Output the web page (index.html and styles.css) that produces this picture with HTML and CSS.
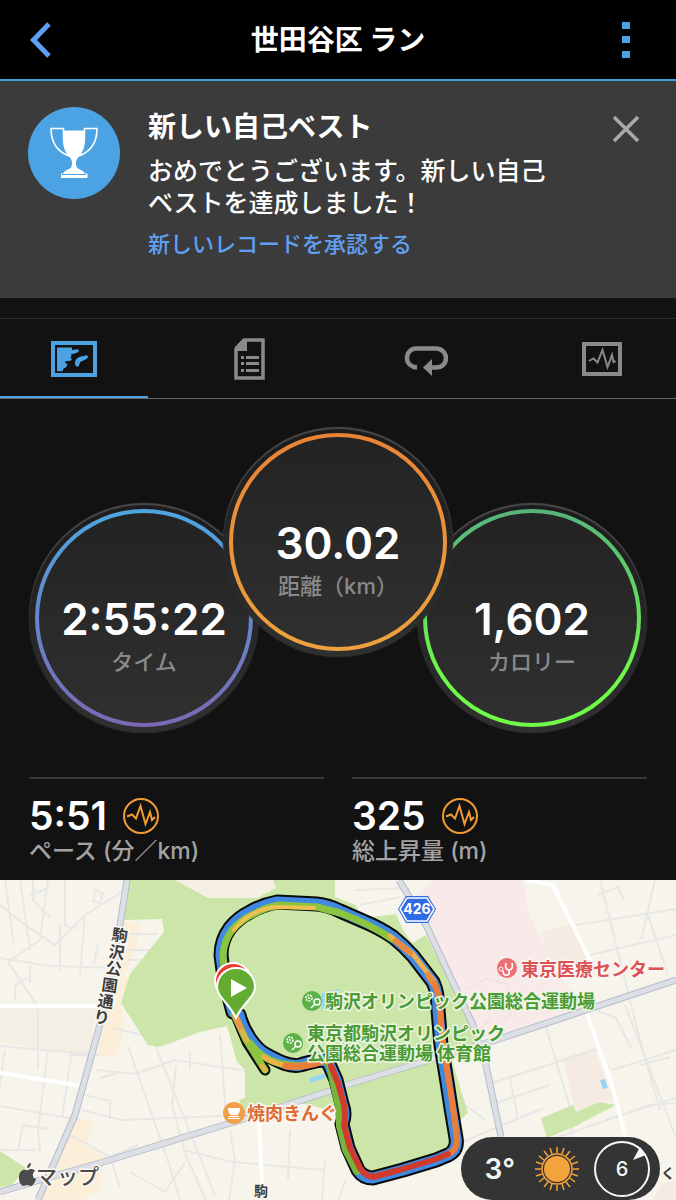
FILE: index.html
```html
<!DOCTYPE html>
<html lang="ja">
<head>
<meta charset="utf-8">
<meta name="viewport" content="width=device-width, initial-scale=1">
<title>世田谷区 ラン</title>
<link rel="stylesheet" href="styles.css">
</head>
<body>
<header class="topbar">
  <button class="icon-btn icon-btn-back" type="button" aria-label="戻る">
    <svg width="24" height="36" viewBox="0 0 24 36"><path d="M21 2 5.500 18 21 34" fill="none" stroke="#5f9ff5" stroke-width="5"/></svg>
  </button>
  <h1 class="topbar-title">世田谷区 ラン</h1>
  <button class="icon-btn" type="button" aria-label="メニュー">
    <svg width="8" height="36" viewBox="0 0 8 36" fill="#4ba3e3"><path d="M0 0h8v7H0zM0 14h8v7H0zM0 29h8v7H0z"/></svg>
  </button>
</header>

<section class="banner">
  <svg class="trophy" viewBox="0 0 92 92">
    <circle cx="46" cy="46" r="46" fill="#4ba3e3"/>
    <g fill="none" stroke="#fff" stroke-width="1.600">
      <path d="M35.500 26V21.500H23c0 13 6 23 18 27.500"/>
      <path d="M56.500 26V21.500H69c0 13-6 23-18 27.500"/>
    </g>
    <path d="M35 23.500h22c1 13-1 20-5 25-3 3-5 5-3.500 11 1 3.500 8 3.500 8 7h3v4.500H33v-4.500h2.500c0-3.500 7-3.500 8-7 1.500-6-.5-8-3.500-11-4-5-6-12-5-25z" fill="#fff"/>
    <path d="M34 67.500h24" stroke="#4ba3e3" stroke-width="1"/>
  </svg>
  <div class="banner-text">
    <h2 class="banner-title">新しい自己ベスト</h2>
    <p class="banner-body">おめでとうございます。新しい自己ベストを達成しました！</p>
    <a class="banner-link" href="#records">新しいレコードを承認する</a>
  </div>
  <button class="close-btn" type="button" aria-label="閉じる">
    <svg width="28" height="28" viewBox="0 0 28 28"><path d="M2 2 26 26M26 2 2 26" stroke="#a9a9a9" stroke-width="3.500"/></svg>
  </button>
</section>

<nav class="tabs">
  <button class="tab tab-active" type="button" aria-label="マップ">
    <svg width="46" height="36" viewBox="0 0 46 36" fill="#4ba3e3">
      <path d="M2 2H44V34H2z" fill="none" stroke="#4ba3e3" stroke-width="4"/>
      <path d="M6 6.500h15v2.500l5.500-.8a1.600 1.600 0 0 1 .5 3l-3.500 1.200-3.500.8 .5 2-1 1.500 1.500 1.500-1.500 1.500-5 .5-.5 1.500 2.500 1.500-1.500 3-2.500 1.500-1 2.500H6z"/>
      <path d="M24 22c0-4 3-6.500 9-7l2-.8a1.700 1.700 0 0 1 1 3.200l-4.500 2.600c-3 .5-2.500 2.500-3.500 4.500s-4 1.500-4-2.500z"/>
    </svg>
  </button>
  <button class="tab" type="button" aria-label="詳細">
    <svg width="32" height="42" viewBox="0 0 32 42" fill="#8a8a8a">
      <path d="M10 2H29V40H2V11z" fill="none" stroke="#8a8a8a" stroke-width="3.500"/>
      <path d="M9 1h4v12H1V9z"/>
      <path d="M7 18h3v3H7zM7 24h3v3H7zM7 31h3v3H7zM12 18h13v3H12zM12 24h13v3H12zM12 31h13v3H12z"/>
    </svg>
  </button>
  <button class="tab" type="button" aria-label="ラップ">
    <svg width="44" height="34" viewBox="0 0 44 34">
      <path d="M13 25.500c-6-.5-10-4-10-9.500s4-9.500 9-9.500h20c5 0 10 4 10 9.500s-4 9.500-10 9.500h-6" fill="none" stroke="#8a8a8a" stroke-width="4.500"/>
      <path d="M19 25.500 28 17v17z" fill="#8a8a8a"/>
    </svg>
  </button>
  <button class="tab" type="button" aria-label="グラフ">
    <svg width="40" height="34" viewBox="0 0 40 34" fill="none" stroke="#8a8a8a">
      <path d="M2 2H38V32H2z" stroke-width="4"/>
      <path d="M7 19l4.500-2.500 4 4L20.500 8l5 17 4.500-12 1.500 7 2-1" stroke-width="2"/>
    </svg>
  </button>
</nav>

<section class="rings">
  <div class="ring ring-time"><div class="ring-band"><div class="ring-face">
    <strong class="ring-value">2:55:22</strong><span class="ring-label">タイム</span>
  </div></div></div>
  <div class="ring ring-distance"><div class="ring-band"><div class="ring-face">
    <strong class="ring-value">30.02</strong><span class="ring-label">距離（km）</span>
  </div></div></div>
  <div class="ring ring-calories"><div class="ring-band"><div class="ring-face">
    <strong class="ring-value">1,602</strong><span class="ring-label">カロリー</span>
  </div></div></div>
</section>

<section class="stats">
  <div class="stat">
    <div class="stat-row"><strong class="stat-value">5:51</strong>
      <svg width="38" height="38" viewBox="0 0 38 38" fill="none" stroke="#f19b36"><circle cx="19" cy="19" r="17" stroke-width="2"/><path d="M5 19.500l5-2 4 4L18.500 9l5 18 4.500-12 2 8 3-3" stroke-width="2"/></svg>
    </div>
    <span class="stat-label">ペース (分／km)</span>
  </div>
  <div class="stat">
    <div class="stat-row"><strong class="stat-value">325</strong>
      <svg width="38" height="38" viewBox="0 0 38 38" fill="none" stroke="#f19b36"><circle cx="19" cy="19" r="17" stroke-width="2"/><path d="M5 19.500l5-2 4 4L18.500 9l5 18 4.500-12 2 8 3-3" stroke-width="2"/></svg>
    </div>
    <span class="stat-label">総上昇量 (m)</span>
  </div>
</section>

<section class="map">
  <svg class="map-canvas" viewBox="0 880 676 320" role="img" aria-label="ルートマップ">
    <defs>
      <path id="road-a" d="M127 880 120 925 116 960 98 1032 75 1115 38 1200"/>
      <path id="road-b" d="M0 1192 40 1180 100 1163 247 1118 333 1090 346 1085 436 1058 496 1040 586 1010 676 980"/>
      <path id="road-c" d="M399 880 426 925 473 1025 486 1065 501 1137"/>
      <path id="loop" d="M328 1062 336 1080 342 1104Q346 1114 342 1124L348 1148 358 1170Q363 1178 373 1178L403 1170 436 1160 448 1155Q458 1150 456 1138L451 1108 447 1082 441 1045 438 1010Q438 992 433 982L413 956Q404 946 393 937 380 928 363 921L340 911Q328 905 317 904L277 902Q262 905 250 912 238 918 230 928 221 940 221 955L224 978 233 1012"/>
      <path id="spur" d="M239 1015C243 1032 256 1050 267 1055 280 1062 290 1067 300 1065 312 1062 320 1058 328 1062"/>
    </defs>
    <rect y="880" width="676" height="320" fill="#f7f4ec"/>

    <g fill="#fbefd9">
      <path d="M124 922h16l-3 24-12 28 4 4-7 20 2 32-8 26-20 1 8-30z"/>
      <path d="M76 1118l18 4-7 22 18 14-5 30-18 12H36z"/>
    </g>
    <path d="M0 1008h96l-6 50-90-16z" fill="#f4efe4"/>
    <path d="M541 932l32-9 18 39h-42zM563 1058l31-10 20 54-14-1-24 11z" fill="#f5ebe2"/>
    <path d="M653 1200l8-16 15-4v20z" fill="#f5ebe2"/>
    <path d="M175 880 208 898H257L276 888 273 880z" fill="#f5efe4"/>
    <path d="M433 880h90l5 32 11 23 12 27 33 48-81 27-24 1-53-113-8-30z" fill="#f9eaea"/>

    <g class="street">
      <path d="M5 880l9 65M20 880l10 70M33 880v20l17 18M48 880l-8 60-32 22M0 905l25 20 30 20 30-30 40-25M30 895l20-8M65 880v46l12 2M85 915l-5 60M0 958l50 8 70 2M60 925v45M30 966v16M8 962l30 45M15 1000v-14l12-8M95 890l8 3-3 10-7-2z"/>
      <path d="M128 934h30M126 950h28M128 960h20M98 944l-4 20M38 1010v60M0 1046l90 8M5 1050l-6 40M0 1106l80 14M48 1050l-10 80 2 22M0 1150h35M18 1150l5-25 26 4M72 1050l-10 68M70 1055h30"/>
      <path d="M114 1028l32 8M128 1046l40 115 12 39M155 1045l60 150M96 1070l40 4 38-14 80 12M85 1095l25 6v18M82 1110l40 10 100-4M220 1034l6 84M190 1052v18M176 1066l-4 40 14 50 20 44M100 1078l20-6M70 1135l40 22 28-12M110 1157l10 30M130 1172l35 20 20-30M183 1150l50 12 90 8M230 1130l5 30-6 40M290 1130l-2 50M325 1160l-3 40M345 1180l-6 20"/>
      <path d="M355 890l55-2M360 905l40-8M600 880l40 160 20 70M655 880l-14 60M598 895l20-8 6 12M576 925l100-16M590 955l86-20M648 915l20 60M545 1024l24 80 8 70M510 1078l8 42M625 1005l50 130M640 1065l30-8M486 1085l62-20 50-16M490 1105l60-20M455 1145l76-32 12-4M550 1140l100-35 26-2M465 1105l20 15M612 1070l64-20M596 1010l20 8 15 30M605 1120l71-22"/>
    </g>
    <g class="street street-soft">
      <path d="M467 990l20-12 20 6 4 30-8 6M480 1030l10-12"/>
    </g>

    <g fill="#cbe6a8">
      <path d="M129 880H175L208 898H257L276 888 273 880H335V897L356 905 361 918 396 914 404 932 412 943 426 935 473 1028 479 1046 450 1054 468 1113 455 1125V1148L373 1178 352 1160 338 1112 300 1103 247 1118 239 1100 245 1098V1070L237 1062 227 1026 200 1032 160 1047 148 1045 121 1003 130 974 164 932 162 919 124 920z"/>
      <path d="M0 1151l26 17-14 17-12 2z"/>
      <path d="M541 1118l32-13 8 19-34 14zM576 1112l23-10 17 3-37 19z"/>
    </g>
    <path d="M322 993l17-4v8l-17 13zM309 1078l17-5v5l-16 5zM600 1080l5-1 3 9-5 1z" fill="#97d5f2"/>

    <path d="M0 1006h99M0 1073l82 13M526 880l27 5 38 77M586 1011l27 77 13 50M259 1118l3 66" fill="none" stroke="#fff" stroke-width="4"/>

    <g fill="none" stroke="#b7bccc" stroke-width="7" stroke-linejoin="round">
      <use href="#road-a"/><use href="#road-b"/><use href="#road-c"/>
    </g>
    <g fill="none" stroke="#dcdfe4" stroke-width="5" stroke-linejoin="round">
      <use href="#road-a"/><use href="#road-b"/><use href="#road-c"/>
    </g>

    <g fill="none" stroke-linecap="round" stroke-linejoin="round">
      <g stroke="#0a0a0a" stroke-width="15"><use href="#loop"/><use href="#spur"/></g>
      <path d="M233 1008 247 1042 265 1070" stroke="#0a0a0a" stroke-width="11"/>
      <g stroke="#4089e0" stroke-width="11"><use href="#loop"/><use href="#spur"/></g>
      <path d="M225 980 223 955Q224 940 233 929 242 919 254 914 266 907 280 905L317 907 340 913Q370 924 392 939" stroke="#8bc53f" stroke-width="7"/>
      <path d="M234 1014 246 1040 265 1070" stroke="#8bc53f" stroke-width="7"/>
      <path d="M234 930Q250 909 277 907L314 908" stroke="#efc050" stroke-width="4"/>
      <path d="M250 1043Q262 1060 282 1064L300 1066 324 1061" stroke="#8bc53f" stroke-width="7"/>
      <path d="M264 1057Q278 1066 290 1066" stroke="#efb04a" stroke-width="5"/>
      <path d="M235 1015 242 1031" stroke="#e9964a" stroke-width="6"/>
      <path d="M242 1031 247 1041M262 1066 265 1070" stroke="#d9b74a" stroke-width="5"/>
      <path d="M286 1066Q304 1068 322 1061" stroke="#ea7d3c" stroke-width="7"/>
      <path d="M390 936 412 953 434 981" stroke="#efb04a" stroke-width="5"/>
      <path d="M396 941 410 953M428 975 435 986" stroke="#ea8a3c" stroke-width="6"/>
      <path d="M435 984Q439 994 440 1012L443 1045 449 1082 453 1108 457 1138Q458 1150 447 1155" stroke="#ea7d3c" stroke-width="6"/>
      <path d="M330 1065 333 1080 339 1106 340 1126 346 1150 357 1171" stroke="#76b43e" stroke-width="8"/>
      <path d="M331 1066 338 1083 344 1105Q346 1114 344 1125L350 1148 360 1168Q365 1176 373 1177L403 1169 436 1159 448 1154" stroke="#d23a2c" stroke-width="6"/>
    </g>

    <g stroke="#fff" stroke-width="2">
      <path d="M234 1013C226 999 215 992 215 981a18 18 0 0 1 36 0c0 11-10 18-17 32z" fill="#ea3e36"/>
      <path d="M236 1018C229 1003 217 997 217 987a19 19 0 0 1 38 0c0 10-12 16-19 31z" fill="#63ab31"/>
    </g>
    <path d="M231 979v18l16-9z" fill="#fff"/>

    <path d="M406 896h22l8 13-8 14h-22l-8-14z" fill="#2f6ce5"/>
    <path d="M407 898h20l7 11-7 12h-20l-7-12z" fill="none" stroke="#fff" stroke-width="1.500"/>

    <g fill="#5cb147"><circle cx="312" cy="1001" r="10"/><circle cx="293" cy="1043" r="10"/></g>
    <g fill="none" stroke="#fff" stroke-width="1.500">
      <circle cx="309" cy="998" r="3" stroke-dasharray="2 1"/><circle cx="317" cy="1002" r="3"/><path d="M315 1004l-4 4M308 998h2"/>
      <circle cx="290" cy="1040" r="3" stroke-dasharray="2 1"/><circle cx="298" cy="1044" r="3"/><path d="M296 1046l-4 4M289 1040h2"/>
    </g>
    <circle cx="507" cy="968" r="10" fill="#ec6f75"/>
    <path d="M506 963c-1 4 0 7 3 7s4-3 3-7M509 970c1 4-1 6-4 5s0-4-3-4" fill="none" stroke="#fff" stroke-width="1.700"/>
    <circle cx="501" cy="969" r="2" fill="none" stroke="#fff"/>
    <circle cx="234" cy="1113" r="11" fill="#f0a04b"/>
    <path d="M228 1108h12c0 5-2 7-4 7h-4c-2 0-4-2-4-7zM229 1116h10v1h-10zM228 1118h12v1h-12z" fill="#fff"/>

    <text class="lbl lbl-shield" x="417" y="914" text-anchor="middle">426</text>
    <text class="lbl lbl-red" x="521" y="976">東京医療センター</text>
    <text class="lbl lbl-green" x="325" y="1008">駒沢オリンピック公園総合運動場</text>
    <text class="lbl lbl-green" x="307" y="1040">東京都駒沢オリンピック</text>
    <text class="lbl lbl-green" x="307" y="1060">公園総合運動場 体育館</text>
    <text class="lbl lbl-orange" x="247" y="1120">焼肉きんぐ</text>
    <text class="lbl lbl-road" x="111 108 105 101 97 93" y="940 957 973 990 1006 1022" rotate="8">駒沢公園通り</text>
    <text class="lbl lbl-road lbl-small" x="254" y="1196">駒</text>
    <text class="lbl lbl-road lbl-small" x="647" y="1178">ゃく</text>

    <path d="M28 1170c3-2 6-1 7 1-3 2-3 7 1 8-1 3-3 7-5 7s-2-1-4-1-2 1-4 1c-5-2-6-14 0-16 2-1 4 1 5 0zM27 1168c0-3 2-5 4-5 0 3-2 5-4 5z" fill="#4b4b4b"/>
    <text class="lbl lbl-brand" x="36" y="1184">マップ</text>
  </svg>

  <div class="weather">
    <span class="weather-temp">3°</span>
    <svg width="46" height="46" viewBox="-23 -23 46 46">
      <g stroke="#f2a33c" stroke-width="1.500" fill="none">
        <circle r="15"/>
        <path d="M0-16V-22M0 16V22M-16 0H-22M16 0H22M5-15 7-21M-5-15-7-21M5 15 7 21M-5 15-7 21M9-13 13-18M-9-13-13-18M9 13 13 18M-9 13-13 18M13-9 18-13M-13-9-18-13M13 9 18 13M-13 9-18 13M15-5 21-7M-15-5-21-7M15 5 21 7M-15 5-21 7"/>
      </g>
      <circle r="13" fill="#f2a33c"/>
    </svg>
    <div class="wind">
      <svg class="wind-dial" viewBox="0 0 58 58"><circle cx="29" cy="29" r="27" fill="none" stroke="#f4f8f8" stroke-width="2"/><path d="M40 20 47 7 53 15z" fill="#f4f8f8"/></svg>
      <span>6</span>
    </div>
  </div>
</section>
</body>
</html>
```
FILE: styles.css
```css
* { box-sizing: border-box; }

body {
  margin: 0;
  background: #121212;
  color: #fff;
  font-family: Inter, "Noto Sans CJK JP", sans-serif;
}

h1, h2, p { margin: 0; }

button {
  padding: 0;
  border: 0;
  background: none;
  cursor: pointer;
}

svg { display: block; }

.topbar {
  display: flex;
  align-items: center;
  justify-content: space-between;
  padding: 0 28px;
  height: 81px;
  background: #000;
  border-bottom: 2px solid #3f9fe0;
}

.icon-btn {
  display: flex;
  align-items: center;
  justify-content: center;
  width: 44px;
  height: 44px;
}

.icon-btn-back { justify-content: flex-start; }

.topbar-title {
  font-size: 28px;
  line-height: 40px;
  font-weight: 700;
}

.banner {
  display: flex;
  align-items: flex-start;
  padding: 26px 28px 38px;
  background: #3b3b3b;
}

.trophy {
  flex: none;
  width: 92px;
  height: 92px;
}

.banner-text {
  flex: 1;
  padding: 0 44px 0 28px;
}

.banner-title {
  font-size: 28px;
  line-height: 40px;
  font-weight: 700;
}

.banner-body {
  margin-top: 8px;
  font-size: 25px;
  line-height: 32px;
  font-weight: 500;
  text-spacing-trim: space-all;
}

.banner-link {
  display: block;
  margin-top: 9px;
  font-size: 22px;
  line-height: 32px;
  font-weight: 500;
  color: #619ff3;
  text-decoration: none;
}

.close-btn {
  display: flex;
  align-items: center;
  justify-content: center;
  width: 44px;
  height: 44px;
}

.tabs {
  display: flex;
  justify-content: space-between;
  margin-top: 20px;
  border-top: 1px solid #2f2f2f;
  border-bottom: 1px solid #666;
}

.tab {
  display: flex;
  align-items: center;
  justify-content: center;
  width: 148px;
  height: 79px;
  padding-top: 2px;
  border-bottom: 2px solid transparent;
}

.tab-active { border-bottom-color: #4ba3e3; }

.rings {
  display: flex;
  justify-content: center;
  align-items: flex-end;
  padding: 28px 28px 0;
}

.ring {
  flex: none;
  width: 230px;
  height: 230px;
  padding: 6px;
  border-radius: 50%;
  background: linear-gradient(#1c1c1c, #303030);
  box-shadow: inset 0 2px 1px #4a4a4a, 0 0 2px #2c2c2c;
}

.ring-band {
  height: 100%;
  padding: 4px;
  border-radius: 50%;
}

.ring-face {
  display: flex;
  flex-direction: column;
  align-items: center;
  height: 100%;
  padding-top: 78px;
  border-radius: 50%;
  background: linear-gradient(#232323, #303030);
}

.ring-time .ring-band { background: linear-gradient(#4ea5df, #7b68b4); }

.ring-distance {
  position: relative;
  margin: 0 -36px 76px;
}

.ring-distance .ring-band { background: linear-gradient(#e98336, #eea23d); }
.ring-calories .ring-band { background: linear-gradient(#56b47b, #6ffb48 80%); }

.ring-value {
  font-size: 44px;
  line-height: 56px;
  font-weight: 600;
}

.ring-label {
  font-size: 22px;
  line-height: 30px;
  font-weight: 500;
  color: #898989;
}

.stats {
  display: grid;
  grid-template-columns: 1fr 1fr;
  gap: 28px;
  padding: 44px 29px 13px;
}

.stat {
  border-top: 2px solid #383838;
  padding-top: 17px;
}

.stat-row {
  display: flex;
  align-items: center;
  gap: 15px;
}

.stat-value {
  font-size: 39px;
  line-height: 40px;
  font-weight: 600;
}

.stat-label {
  display: block;
  font-size: 23px;
  line-height: 31px;
  font-weight: 500;
  color: #a3a3a3;
}

.map { position: relative; }

.map-canvas { width: 100%; height: auto; }

.street {
  fill: none;
  stroke: #e7e7e5;
  stroke-width: 2;
}

.street-soft { stroke: #f2e2e3; }

.lbl {
  font-family: "Noto Sans CJK JP", sans-serif;
  font-size: 18px;
  font-weight: 700;
  paint-order: stroke;
  stroke: #fbf8f2;
  stroke-width: 3px;
  stroke-linejoin: round;
}

.lbl-shield {
  font-family: Inter, sans-serif;
  font-size: 14px;
  fill: #fff;
  stroke: none;
}

.lbl-red { fill: #dc5257; }
.lbl-green { fill: #4a9a35; stroke: #eef6e2; }
.lbl-orange { fill: #dd6b33; }
.lbl-road { font-size: 16px; fill: #3c3c3c; }
.lbl-small { font-size: 14px; }

.lbl-brand {
  font-size: 21px;
  font-weight: 500;
  fill: #4b4b4b;
}

.weather {
  position: absolute;
  right: 16px;
  bottom: 0;
  display: flex;
  align-items: center;
  gap: 13px;
  height: 63px;
  padding: 0 9px 0 24px;
  border-radius: 32px;
  background: #343434;
  color: #f0f7f7;
}

.weather-temp {
  margin-right: 6px;
  font-size: 28px;
  line-height: 32px;
  font-weight: 600;
}

.wind {
  display: grid;
  place-items: center;
  font-size: 20px;
  line-height: 24px;
  font-weight: 500;
}

.wind > * { grid-area: 1 / 1; }

.wind-dial { width: 58px; height: 58px; }
```
